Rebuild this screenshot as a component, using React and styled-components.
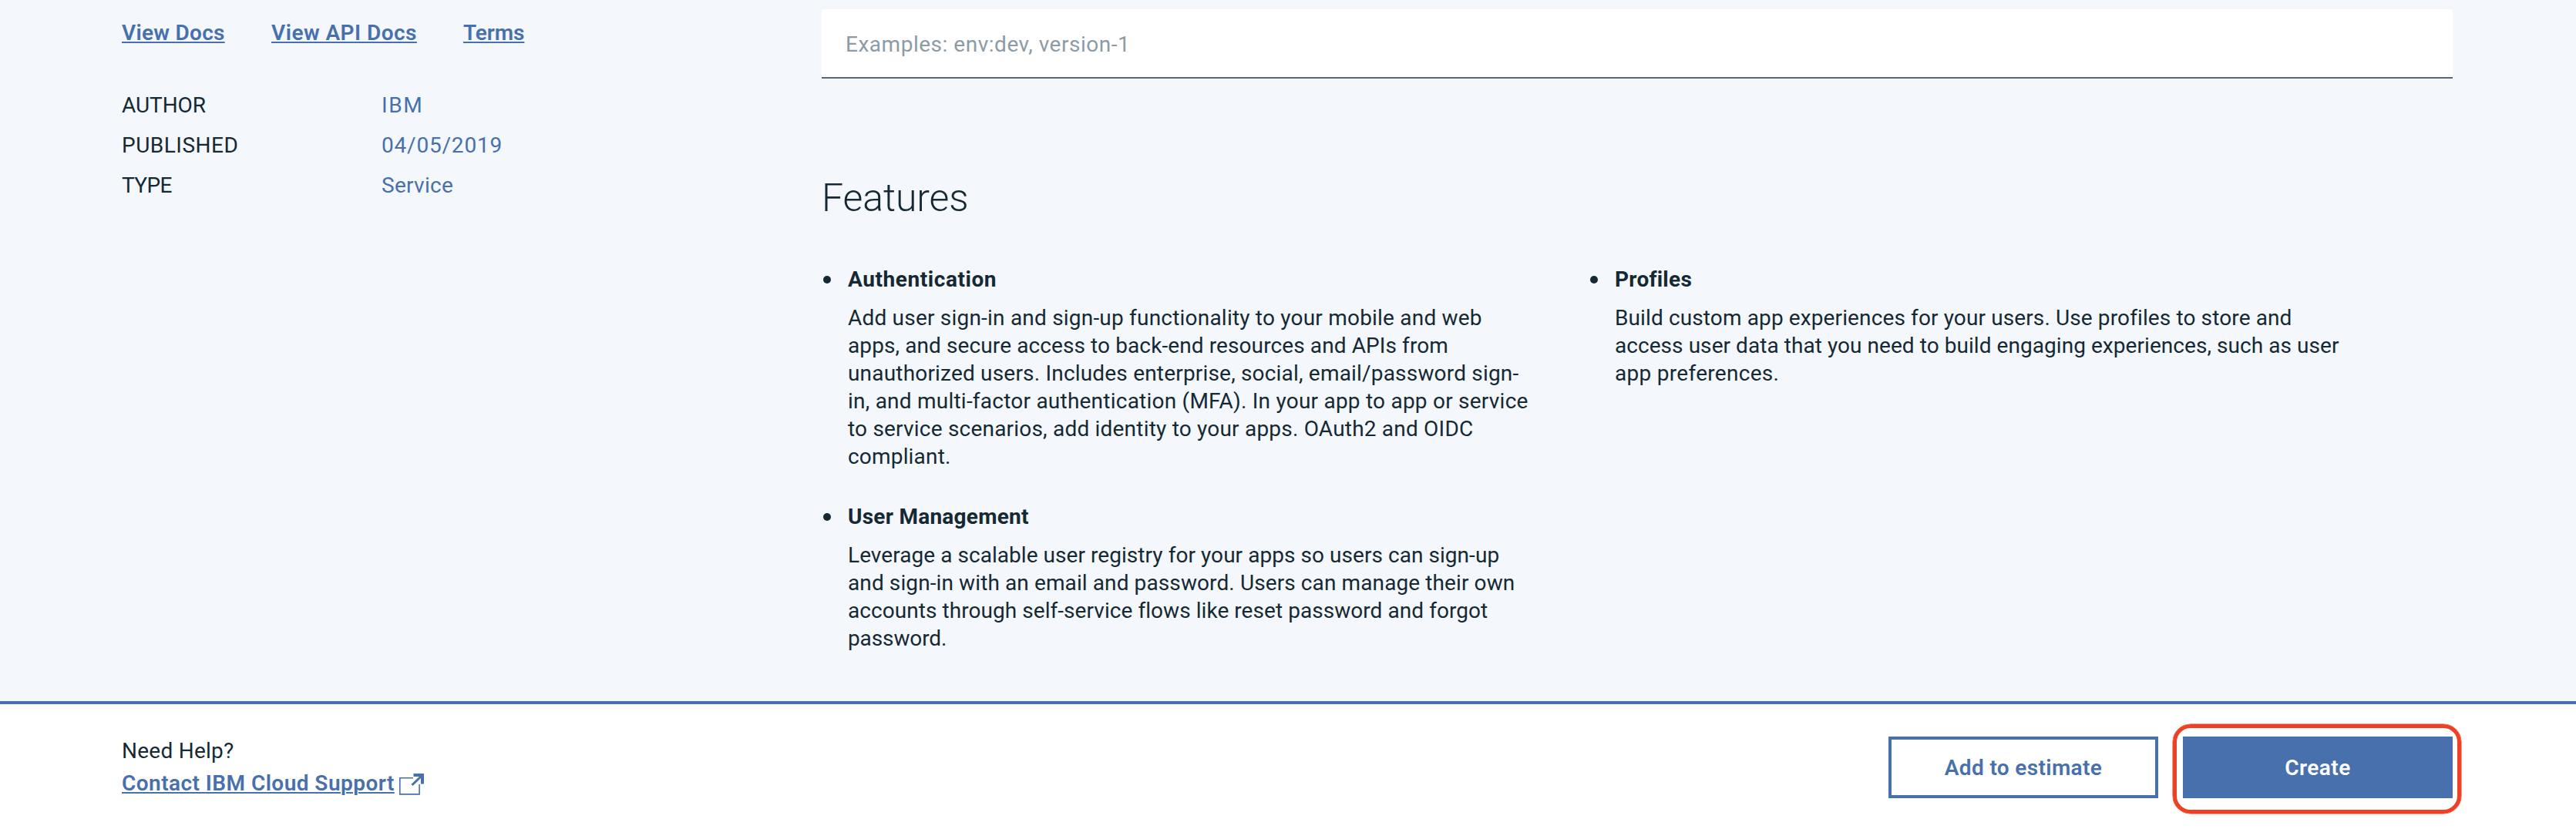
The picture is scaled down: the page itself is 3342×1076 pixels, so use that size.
import React from "react";
import styled, { createGlobalStyle } from "styled-components";

const color = {
  page: "#f4f7fb",
  surface: "#ffffff",
  text: "#152935",
  link: "#4770ac",
  placeholder: "#8c9ba5",
  rule: "#5a6872",
  highlight: "#ee4024",
};

const GlobalStyle = createGlobalStyle`
  *, *::before, *::after { box-sizing: border-box; }
  body {
    margin: 0;
    background: ${color.surface};
    color: ${color.text};
    font: 400 28px/36px Roboto, "Liberation Sans", sans-serif;
  }
`;

const Page = styled.div`
  display: flex;
  flex-direction: column;
  height: 1076px;
  overflow: hidden;
`;

const Main = styled.main`
  display: flex;
  height: 910px;
  padding-left: 158px;
  background: ${color.page};
`;

const Sidebar = styled.aside`
  width: 908px;
  padding-top: 25px;
`;

const LinkRow = styled.nav`
  display: flex;
  gap: 60px;
  margin-bottom: 58px;
`;

const TextLink = styled.a`
  color: ${color.link};
  font-weight: 600;
  white-space: nowrap;
  letter-spacing: ${(p) => p.$track || 0}px;
  text-decoration: underline;
  text-decoration-thickness: 2px;
  text-underline-offset: 2px;
`;

const NavLink = styled(TextLink)`
  width: ${(p) => p.$width}px;
`;

const Details = styled.dl`
  display: grid;
  grid-template-columns: 337px auto;
  row-gap: 16px;
  margin: 0;
`;

const Term = styled.dt`
  letter-spacing: ${(p) => p.$track}px;
`;

const Value = styled.dd`
  margin: 0;
  color: ${color.link};
  letter-spacing: ${(p) => p.$track}px;
`;

const Content = styled.section`
  width: 2116px;
  padding-top: 12px;
`;

const TagsInput = styled.input`
  display: block;
  width: 100%;
  height: 90px;
  padding: 2px 31px 0;
  border: 0;
  border-bottom: 2px solid ${color.rule};
  border-radius: 0;
  background: ${color.surface};
  font: inherit;
  letter-spacing: 0.52px;
  outline: none;
  &::placeholder {
    color: ${color.placeholder};
    opacity: 1;
  }
`;

const Heading = styled.h2`
  margin: 123px 0 56px;
  font-size: 50px;
  line-height: 64px;
  font-weight: 300;
  letter-spacing: -0.1px;
`;

const Columns = styled.div`
  display: grid;
  grid-template-columns: 995px 1fr;
`;

const FeatureList = styled.ul`
  display: flex;
  flex-direction: column;
  gap: 42px;
  margin: 0;
  padding: 0;
  list-style: none;
`;

const FeatureItem = styled.li`
  display: grid;
  grid-template-columns: 34px 1fr;
`;

const Bullet = styled.span`
  width: 10px;
  height: 10px;
  margin: 13px 0 0 2px;
  border-radius: 50%;
  background: ${color.text};
`;

const FeatureTitle = styled.h3`
  margin: 0 0 14px;
  font-size: 28px;
  line-height: 36px;
  font-weight: 700;
  letter-spacing: ${(p) => p.$track}px;
`;

const FeatureText = styled.p`
  margin: 0;
`;

const Line = styled.span`
  display: block;
  white-space: nowrap;
  letter-spacing: ${(p) => p.$track}px;
`;

const Footer = styled.footer`
  display: flex;
  justify-content: space-between;
  height: 166px;
  padding: 38px 160px 0 158px;
  border-top: 4px solid ${color.link};
  background: ${color.surface};
`;

const Help = styled.div`
  padding-top: 2px;
  line-height: 42px;
`;

const HelpLabel = styled.div`
  letter-spacing: 0.25px;
`;

const HelpLink = styled.div`
  display: flex;
  align-items: center;
  gap: 6px;
`;

const Actions = styled.div`
  display: flex;
  gap: 32px;
  padding-top: 4px;
`;

const Button = styled.button`
  width: 350px;
  height: 80px;
  padding: 2px 0 0;
  border: 4px solid ${color.link};
  border-radius: 0;
  background: ${(p) => (p.$primary ? color.link : color.surface)};
  color: ${(p) => (p.$primary ? color.surface : color.link)};
  font: inherit;
  font-weight: 600;
  letter-spacing: ${(p) => p.$track}px;
`;

const Highlighted = styled.div`
  position: relative;
  height: 80px;
  &::after {
    content: "";
    position: absolute;
    inset: -16px -11px -20px -13px;
    border: 5px solid ${color.highlight};
    border-radius: 23px;
    box-shadow: 0 0 0 0.5px ${color.highlight};
    pointer-events: none;
  }
`;

const LaunchSvg = styled.svg`
  display: block;
  margin-top: 2px;
`;

function LaunchIcon() {
  return (
    <LaunchSvg width="32" height="28" viewBox="0 0 32 28" fill="none" stroke={color.link}>
      <path d="M18 5.8H.8V26.9H26.1V14" strokeWidth="1.6" />
      <path d="M16.5 15L29 3" strokeWidth="3" />
      <path d="M18.5 2H30V13.5" strokeWidth="4" />
    </LaunchSvg>
  );
}

const links = [
  { label: "View Docs", track: 0.27, width: 134 },
  { label: "View API Docs", track: 0.46, width: 189 },
  { label: "Terms", track: -0.08, width: 80 },
];

const details = [
  { term: "AUTHOR", termTrack: -0.07, value: "IBM", valueTrack: 1.6 },
  { term: "PUBLISHED", termTrack: 0.5, value: "04/05/2019", valueTrack: 0.8 },
  { term: "TYPE", termTrack: -0.6, value: "Service", valueTrack: 0.29 },
];

const featureColumns = [
  [
    {
      title: "Authentication",
      track: 0.57,
      lines: [
        ["Add user sign-in and sign-up functionality to your mobile and web", 0.207],
        ["apps, and secure access to back-end resources and APIs from", 0.102],
        ["unauthorized users. Includes enterprise, social, email/password sign-", 0.188],
        ["in, and multi-factor authentication (MFA). In your app to app or service", 0.229],
        ["to service scenarios, add identity to your apps. OAuth2 and OIDC", 0.205],
        ["compliant.", 0.181],
      ],
    },
    {
      title: "User Management",
      track: 0.25,
      lines: [
        ["Leverage a scalable user registry for your apps so users can sign-up", 0.053],
        ["and sign-in with an email and password. Users can manage their own", 0.105],
        ["accounts through self-service flows like reset password and forgot", 0.057],
        ["password.", -0.12],
      ],
    },
  ],
  [
    {
      title: "Profiles",
      track: 0.25,
      lines: [
        ["Build custom app experiences for your users. Use profiles to store and", 0.12],
        ["access user data that you need to build engaging experiences, such as user", 0.056],
        ["app preferences.", 0.295],
      ],
    },
  ],
];

function Feature({ title, track, lines }) {
  return (
    <FeatureItem>
      <Bullet />
      <div>
        <FeatureTitle $track={track}>{title}</FeatureTitle>
        <FeatureText>
          {lines.map(([text, lineTrack]) => (
            <Line key={text} $track={lineTrack}>
              {text}
            </Line>
          ))}
        </FeatureText>
      </div>
    </FeatureItem>
  );
}

export default function App() {
  return (
    <Page>
      <GlobalStyle />
      <Main>
        <Sidebar>
          <LinkRow>
            {links.map((l) => (
              <NavLink key={l.label} $track={l.track} $width={l.width}>
                {l.label}
              </NavLink>
            ))}
          </LinkRow>
          <Details>
            {details.map((d) => (
              <React.Fragment key={d.term}>
                <Term $track={d.termTrack}>{d.term}</Term>
                <Value $track={d.valueTrack}>{d.value}</Value>
              </React.Fragment>
            ))}
          </Details>
        </Sidebar>
        <Content>
          <TagsInput placeholder="Examples: env:dev, version-1" />
          <Heading>Features</Heading>
          <Columns>
            {featureColumns.map((column) => (
              <FeatureList key={column[0].title}>
                {column.map((f) => (
                  <Feature key={f.title} {...f} />
                ))}
              </FeatureList>
            ))}
          </Columns>
        </Content>
      </Main>
      <Footer>
        <Help>
          <HelpLabel>Need Help?</HelpLabel>
          <HelpLink>
            <TextLink $track={0.45}>Contact IBM Cloud Support</TextLink>
            <LaunchIcon />
          </HelpLink>
        </Help>
        <Actions>
          <Button $track={0.36}>Add to estimate</Button>
          <Highlighted>
            <Button $primary $track={0.47}>
              Create
            </Button>
          </Highlighted>
        </Actions>
      </Footer>
    </Page>
  );
}
